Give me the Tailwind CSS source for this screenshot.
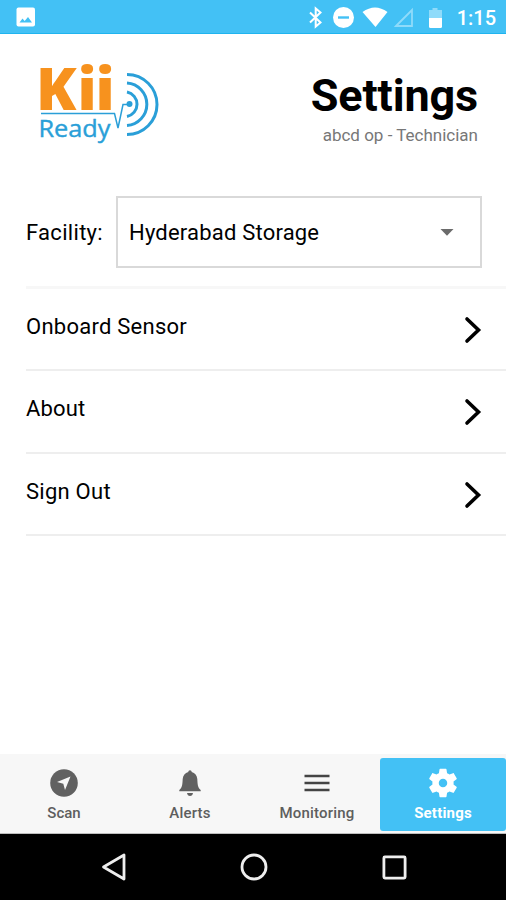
<!DOCTYPE html>
<html lang="en">
<head>
    <meta charset="UTF-8">
    <meta name="viewport" content="width=device-width, initial-scale=1.0">
    <title>Settings</title>
    <script src="https://cdn.jsdelivr.net/npm/@tailwindcss/browser@4"></script>
</head>
<body class="bg-white font-['Roboto',sans-serif] text-black">
    <div class="flex h-[900px] w-[506px] flex-col overflow-hidden">
        <!-- Status bar -->
        <div class="flex h-[34px] shrink-0 items-center justify-between border-b border-[#1fb4ef] bg-[#43c1f5] pr-[10px] pl-4 text-white">
            <svg class="mt-px h-5 w-5" viewBox="0 0 20 20">
                <rect x="0.5" y="0.5" width="18.5" height="19" rx="2" fill="#fff"/>
                <path d="M3.500 15.500L6.500 11.500L8.700 14L12 10L16 15.500z" fill="#43c1f5"/>
            </svg>
            <div class="flex items-center">
                <svg class="h-[34px] w-[150px]" viewBox="307 0 150 34">
                    <path d="M310 12.500L320.500 22.500L315.700 26.500V8.500L320.500 12.500L310 22.500" fill="none" stroke="#fff" stroke-width="2"/>
                    <circle cx="343.500" cy="17.500" r="10.500" fill="#fff"/>
                    <path d="M338 17.500h11" stroke="#43c1f5" stroke-width="2.400"/>
                    <path d="M362.500 12Q375 3 387.500 12L375.500 27z" fill="#fff"/>
                    <path d="M396 26L412 10V26z" fill="none" stroke="#8fdbfa" stroke-width="1.800"/>
                    <path d="M429 10h3.500V8h5v2h4.500v9h-13z" fill="#8fdbfa"/>
                    <path d="M429 18h13v8.500q0 1.500-1.500 1.500h-10q-1.500 0-1.500-1.500z" fill="#fff"/>
                </svg>
                <span class="mt-[2px] text-[20px] leading-none font-medium">1:15</span>
            </div>
        </div>

        <!-- Header -->
        <div class="flex h-[162px] shrink-0 justify-between pr-7 pl-[25px]">
            <svg class="mt-4 h-[110px] w-[150px] overflow-visible" viewBox="25 50 150 110">
                <text x="36 77.500 95.500" y="110" fill="#f7921e" font-family="Open Sans, sans-serif" font-weight="800" font-size="59">Kii</text>
                <text x="38.500" y="136.500" font-size="24" fill="#2a9fd8" stroke="#2a9fd8" stroke-width="0.400" font-family="Open Sans, sans-serif" textLength="72" lengthAdjust="spacingAndGlyphs">Ready</text>
                <g fill="none" stroke="#2a9fd8">
                    <path d="M41 113.500H114.500L118 128L123 104.500H128" stroke-width="1.500"/>
                    <path d="M127 92A12.500 12.500 0 0 1 127 116.500" stroke-width="3"/>
                    <path d="M127 83A21.300 21.300 0 0 1 127 125.500" stroke-width="3"/>
                    <path d="M127 74.500A30 30 0 0 1 127 134.500" stroke-width="3"/>
                </g>
                <circle cx="129.500" cy="104" r="3" fill="#2a9fd8"/>
            </svg>
            <div class="pt-[35px] text-right">
                <h1 class="text-[45px] leading-[53px] font-bold tracking-[-0.15px]">Settings</h1>
                <p class="mt-[3px] text-[17px] leading-5 text-[#777]">abcd op - Technician</p>
            </div>
        </div>

        <!-- Facility -->
        <div class="flex h-[72px] shrink-0 items-center justify-between pr-6 pl-[26px]">
            <span class="text-[22px] tracking-[0.3px]">Facility:</span>
            <div class="flex h-[72px] w-[366px] items-center justify-between border-2 border-[#d9d9d9] pr-[26px] pl-[11px]">
                <span class="text-[22px] tracking-[0.2px]">Hyderabad Storage</span>
                <svg class="h-[7px] w-[14px]" viewBox="0 0 14 7"><path d="M0.500 0h13L7 6.800z" fill="#6b6b6b"/></svg>
            </div>
        </div>

        <!-- Menu -->
        <div class="mt-[18px] ml-[26px] flex grow flex-col border-t-[3px] border-[#f7f7f7]">
            <div class="flex h-[82px] items-center justify-between border-b-2 border-[#eeeeee] pr-6">
                <span class="mb-[6px] text-[22px] tracking-[0.25px]">Onboard Sensor</span>
                <svg class="mt-px h-7 w-[18px]" viewBox="0 0 18 28"><path d="M3 3L14.500 14L3 25" fill="none" stroke="#000" stroke-width="3.600" stroke-linecap="round"/></svg>
            </div>
            <div class="flex h-[83px] items-center justify-between border-b-2 border-[#eeeeee] pr-6">
                <span class="mb-[6px] text-[22px] tracking-[0.15px]">About</span>
                <svg class="h-7 w-[18px]" viewBox="0 0 18 28"><path d="M3 3L14.500 14L3 25" fill="none" stroke="#000" stroke-width="3.600" stroke-linecap="round"/></svg>
            </div>
            <div class="flex h-[82px] items-center justify-between border-b-2 border-[#eeeeee] pr-6">
                <span class="mb-[5px] text-[22px] tracking-[0.25px]">Sign Out</span>
                <svg class="mt-px h-7 w-[18px]" viewBox="0 0 18 28"><path d="M3 3L14.500 14L3 25" fill="none" stroke="#000" stroke-width="3.600" stroke-linecap="round"/></svg>
            </div>
        </div>

        <!-- Tab bar -->
        <div class="grid h-[80px] shrink-0 grid-cols-[127px_126px_127px_126px] border-b border-[#bdbdbd] bg-[#f7f7f7] pt-[4px] pb-[2px] text-[15px] leading-5 font-medium text-[#5e5e5e]">
            <div class="flex flex-col items-center pt-[11px] pl-px">
                <svg class="h-7 w-7" viewBox="0 0 28 28">
                    <circle cx="14" cy="14" r="13.800" fill="#616161"/>
                    <path d="M20.500 7.500L15 21L13.300 14.700L7 13z" fill="#f7f7f7"/>
                </svg>
                <span class="mt-[6px]">Scan</span>
            </div>
            <div class="flex flex-col items-center pt-[11px]">
                <svg class="h-7 w-7" viewBox="0 0 28 28">
                    <path d="M14 1.300C15 1.300 15.600 2 15.700 3C19 4 21 6.500 21.300 10C21.600 15 21.600 18.500 24.700 21V22.300H3.300V21C6.400 18.500 6.400 15 6.700 10C7 6.500 9 4 12.300 3C12.400 2 13 1.300 14 1.300z" fill="#616161"/>
                    <path d="M11 24h6Q16.500 27 14 27T11 24z" fill="#616161"/>
                </svg>
                <span class="mt-[6px] tracking-[0.2px]">Alerts</span>
            </div>
            <div class="flex flex-col items-center pt-[11px] pl-px">
                <svg class="h-7 w-7" viewBox="0 0 28 28"><path d="M1.500 7h25M1.500 14h25M1.500 21h25" stroke="#444" stroke-width="2.300"/></svg>
                <span class="mt-[6px] tracking-[0.2px]">Monitoring</span>
            </div>
            <div class="flex flex-col items-center rounded-[3px] bg-[#43c1f5] pt-[11px] text-white">
                <svg class="-my-[3px] h-[34px] w-[34px]" viewBox="0 0 24 24">
                    <path fill="#fff" d="M19.430 12.980c.04-.32.07-.64.07-.98s-.03-.66-.07-.98l2.110-1.650c.19-.15.24-.42.12-.64l-2-3.460c-.12-.22-.39-.3-.61-.22l-2.490 1c-.52-.4-1.080-.73-1.690-.98l-.38-2.650C14.460 2.180 14.250 2 14 2h-4c-.25 0-.46.18-.49.42l-.38 2.650c-.61.25-1.170.59-1.690.98l-2.490-1c-.23-.09-.49 0-.61.22l-2 3.460c-.13.22-.07.49.12.64l2.110 1.650c-.04.32-.07.65-.07.98s.03.66.07.98l-2.110 1.650c-.19.15-.24.42-.12.64l2 3.460c.12.22.39.3.61.22l2.490-1c.52.4 1.080.73 1.690.98l.38 2.650c.03.24.24.42.49.42h4c.25 0 .46-.18.49-.42l.38-2.650c.61-.25 1.170-.59 1.690-.98l2.490 1c.23.09.49 0 .61-.22l2-3.460c.12-.22.07-.49-.12-.64zM12 15A3 3 0 1 1 12 9a3 3 0 0 1 0 6z"/>
                </svg>
                <span class="mt-[6px] font-bold tracking-[0.2px]">Settings</span>
            </div>
        </div>

        <!-- Android navigation -->
        <div class="flex h-[66px] shrink-0 items-center justify-between bg-black pr-[99px] pl-[101px]">
            <svg class="h-7 w-[25px]" viewBox="0 0 25 28"><path d="M2.500 14L23 2V26z" fill="none" stroke="#eee" stroke-width="2.800" stroke-linejoin="round"/></svg>
            <svg class="h-7 w-7" viewBox="0 0 28 28"><circle cx="14" cy="14" r="12" fill="none" stroke="#eee" stroke-width="2.800"/></svg>
            <svg class="h-[25px] w-[25px]" viewBox="0 0 25 25"><rect x="1.900" y="1.900" width="21.200" height="21.200" rx="1" fill="none" stroke="#eee" stroke-width="2.800"/></svg>
        </div>
    </div>
</body>
</html>
